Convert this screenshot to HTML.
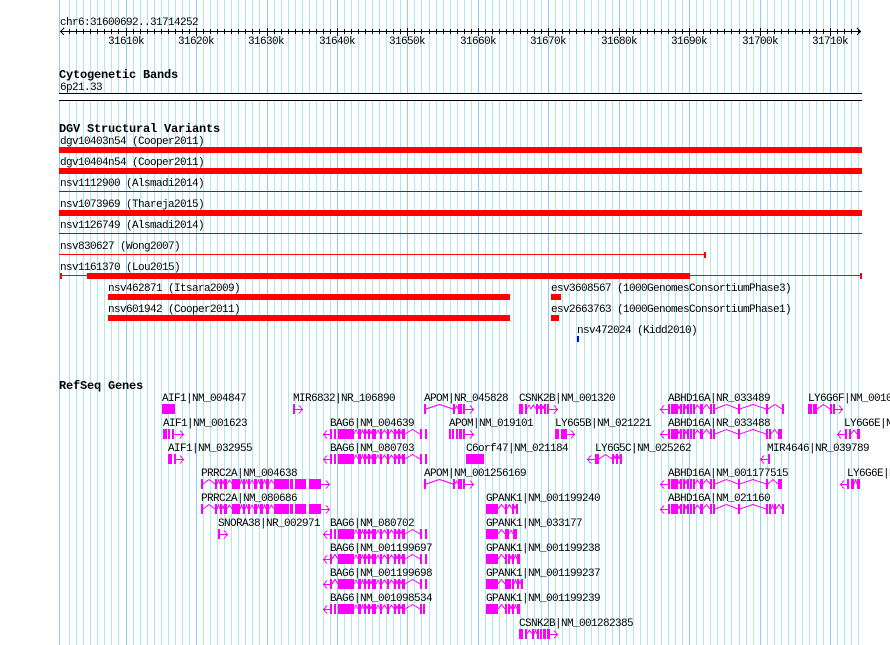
<!DOCTYPE html>
<html><head><meta charset="utf-8"><title>Genome browser</title>
<style>
html,body{margin:0;padding:0;background:#fff}
svg{display:block}
text{font-family:"Liberation Mono","DejaVu Sans Mono",monospace;font-size:11px;fill:#000;letter-spacing:-.6px;white-space:pre}
text.b{font-weight:bold;font-size:12px;letter-spacing:-.2px}
.e{fill:#f0f;stroke:none}
.i{fill:none;stroke:#f0f;stroke-width:1}
</style></head><body>
<svg xmlns="http://www.w3.org/2000/svg" width="890" height="645" viewBox="0 0 890 645" shape-rendering="crispEdges">
<rect width="890" height="645" fill="#fff"/>
<path stroke="#a8ebf0" stroke-width="1" fill="none" d="M69.5 0V645M76.5 0V645M83.5 0V645M90.5 0V645M97.5 0V645M104.5 0V645M111.5 0V645M118.5 0V645M133.5 0V645M140.5 0V645M147.5 0V645M154.5 0V645M161.5 0V645M168.5 0V645M175.5 0V645M182.5 0V645M189.5 0V645M203.5 0V645M210.5 0V645M217.5 0V645M224.5 0V645M231.5 0V645M238.5 0V645M245.5 0V645M252.5 0V645M259.5 0V645M274.5 0V645M281.5 0V645M288.5 0V645M295.5 0V645M302.5 0V645M309.5 0V645M316.5 0V645M323.5 0V645M330.5 0V645M344.5 0V645M351.5 0V645M358.5 0V645M365.5 0V645M372.5 0V645M379.5 0V645M386.5 0V645M393.5 0V645M400.5 0V645M414.5 0V645M421.5 0V645M429.5 0V645M436.5 0V645M443.5 0V645M450.5 0V645M457.5 0V645M464.5 0V645M471.5 0V645M485.5 0V645M492.5 0V645M499.5 0V645M506.5 0V645M513.5 0V645M520.5 0V645M527.5 0V645M534.5 0V645M541.5 0V645M555.5 0V645M562.5 0V645M569.5 0V645M576.5 0V645M584.5 0V645M591.5 0V645M598.5 0V645M605.5 0V645M612.5 0V645M626.5 0V645M633.5 0V645M640.5 0V645M647.5 0V645M654.5 0V645M661.5 0V645M668.5 0V645M675.5 0V645M682.5 0V645M696.5 0V645M703.5 0V645M710.5 0V645M717.5 0V645M724.5 0V645M731.5 0V645M739.5 0V645M746.5 0V645M753.5 0V645M767.5 0V645M774.5 0V645M781.5 0V645M788.5 0V645M795.5 0V645M802.5 0V645M809.5 0V645M816.5 0V645M823.5 0V645M837.5 0V645M844.5 0V645M851.5 0V645M858.5 0V645"/>
<path stroke="#87cefa" stroke-width="1" fill="none" d="M59.5 0V645M126.5 0V645M196.5 0V645M267.5 0V645M337.5 0V645M407.5 0V645M478.5 0V645M548.5 0V645M619.5 0V645M689.5 0V645M760.5 0V645M830.5 0V645"/>

<!-- ruler -->
<path stroke="#000" fill="none" d="M60 31.5H861M69.5 29V34M76.5 29V34M83.5 29V34M90.5 29V34M97.5 29V34M104.5 29V34M111.5 29V34M118.5 29V34M133.5 29V34M140.5 29V34M147.5 29V34M154.5 29V34M161.5 29V34M168.5 29V34M175.5 29V34M182.5 29V34M189.5 29V34M203.5 29V34M210.5 29V34M217.5 29V34M224.5 29V34M231.5 29V34M238.5 29V34M245.5 29V34M252.5 29V34M259.5 29V34M274.5 29V34M281.5 29V34M288.5 29V34M295.5 29V34M302.5 29V34M309.5 29V34M316.5 29V34M323.5 29V34M330.5 29V34M344.5 29V34M351.5 29V34M358.5 29V34M365.5 29V34M372.5 29V34M379.5 29V34M386.5 29V34M393.5 29V34M400.5 29V34M414.5 29V34M421.5 29V34M429.5 29V34M436.5 29V34M443.5 29V34M450.5 29V34M457.5 29V34M464.5 29V34M471.5 29V34M485.5 29V34M492.5 29V34M499.5 29V34M506.5 29V34M513.5 29V34M520.5 29V34M527.5 29V34M534.5 29V34M541.5 29V34M555.5 29V34M562.5 29V34M569.5 29V34M576.5 29V34M584.5 29V34M591.5 29V34M598.5 29V34M605.5 29V34M612.5 29V34M626.5 29V34M633.5 29V34M640.5 29V34M647.5 29V34M654.5 29V34M661.5 29V34M668.5 29V34M675.5 29V34M682.5 29V34M696.5 29V34M703.5 29V34M710.5 29V34M717.5 29V34M724.5 29V34M731.5 29V34M739.5 29V34M746.5 29V34M753.5 29V34M767.5 29V34M774.5 29V34M781.5 29V34M788.5 29V34M795.5 29V34M802.5 29V34M809.5 29V34M816.5 29V34M823.5 29V34M837.5 29V34M844.5 29V34M851.5 29V34M858.5 29V34M126.5 28V36M196.5 28V36M267.5 28V36M337.5 28V36M407.5 28V36M478.5 28V36M548.5 28V36M619.5 28V36M689.5 28V36M760.5 28V36M830.5 28V36M64 28L60.5 31.5L64 35M857 28L860.5 31.5L857 35"/>
<text x="60" y="25">chr6:31600692..31714252</text>
<text x="108" y="44">31610k</text><text x="178" y="44">31620k</text><text x="248" y="44">31630k</text><text x="319" y="44">31640k</text><text x="389" y="44">31650k</text><text x="460" y="44">31660k</text><text x="530" y="44">31670k</text><text x="601" y="44">31680k</text><text x="671" y="44">31690k</text><text x="742" y="44">31700k</text><text x="812" y="44">31710k</text>

<!-- cytobands -->
<text class="b" x="59" y="78">Cytogenetic Bands</text>
<text x="60" y="90">6p21.33</text>
<rect x="59" y="93" width="803" height="8" fill="#fff"/>
<rect x="59" y="93" width="803" height="1" fill="#000"/>
<rect x="59" y="100" width="803" height="1" fill="#000"/>

<!-- DGV -->
<text class="b" x="59" y="132">DGV Structural Variants</text>
<text x="60" y="144">dgv10403n54 (Cooper2011)</text>
<text x="60" y="165">dgv10404n54 (Cooper2011)</text>
<text x="60" y="186">nsv1112900 (Alsmadi2014)</text>
<text x="60" y="207">nsv1073969 (Thareja2015)</text>
<text x="60" y="228">nsv1126749 (Alsmadi2014)</text>
<text x="60" y="249">nsv830627 (Wong2007)</text>
<text x="60" y="270">nsv1161370 (Lou2015)</text>
<text x="108" y="291">nsv462871 (Itsara2009)</text>
<text x="108" y="312">nsv601942 (Cooper2011)</text>
<text x="551" y="291">esv3608567 (1000GenomesConsortiumPhase3)</text>
<text x="551" y="312">esv2663763 (1000GenomesConsortiumPhase1)</text>
<text x="577" y="333">nsv472024 (Kidd2010)</text>
<g fill="#f00">
<rect x="59" y="147" width="803" height="6"/>
<rect x="59" y="168" width="803" height="6"/>
<rect x="59" y="210" width="803" height="6"/>
<rect x="59" y="254" width="646" height="1"/>
<rect x="704" y="252" width="2" height="6"/>
<rect x="60" y="273" width="2" height="6"/>
<rect x="60" y="275" width="802" height="1"/>
<rect x="87" y="273" width="603" height="6"/>
<rect x="860" y="273" width="2" height="6"/>
<rect x="108" y="294" width="402" height="6"/>
<rect x="108" y="315" width="402" height="6"/>
<rect x="551" y="294" width="10" height="6"/>
<rect x="551" y="315" width="8" height="6"/>
</g>
<rect x="59" y="191" width="803" height="1" fill="#00506e"/>
<rect x="59" y="233" width="803" height="1" fill="#00506e"/>
<rect x="577" y="336" width="2" height="6" fill="#00f"/>

<!-- Genes labels -->
<text class="b" x="59" y="389">RefSeq Genes</text>
<text x="162" y="401">AIF1|NM_004847</text>
<text x="293" y="401">MIR6832|NR_106890</text>
<text x="424" y="401">APOM|NR_045828</text>
<text x="519" y="401">CSNK2B|NM_001320</text>
<text x="668" y="401">ABHD16A|NR_033489</text>
<text x="808" y="401">LY6G6F|NM_001003693</text>
<text x="163" y="426">AIF1|NM_001623</text>
<text x="330" y="426">BAG6|NM_004639</text>
<text x="449" y="426">APOM|NM_019101</text>
<text x="555" y="426">LY6G5B|NM_021221</text>
<text x="668" y="426">ABHD16A|NR_033488</text>
<text x="844" y="426">LY6G6E|NR_003943</text>
<text x="168" y="451">AIF1|NM_032955</text>
<text x="330" y="451">BAG6|NM_080703</text>
<text x="466" y="451">C6orf47|NM_021184</text>
<text x="595" y="451">LY6G5C|NM_025262</text>
<text x="767" y="451">MIR4646|NR_039789</text>
<text x="201" y="476">PRRC2A|NM_004638</text>
<text x="424" y="476">APOM|NM_001256169</text>
<text x="668" y="476">ABHD16A|NM_001177515</text>
<text x="847" y="476">LY6G6E|NM_001001852</text>
<text x="201" y="501">PRRC2A|NM_080686</text>
<text x="486" y="501">GPANK1|NM_001199240</text>
<text x="668" y="501">ABHD16A|NM_021160</text>
<text x="218" y="526">SNORA38|NR_002971</text>
<text x="330" y="526">BAG6|NM_080702</text>
<text x="486" y="526">GPANK1|NM_033177</text>
<text x="330" y="551">BAG6|NM_001199697</text>
<text x="486" y="551">GPANK1|NM_001199238</text>
<text x="330" y="576">BAG6|NM_001199698</text>
<text x="486" y="576">GPANK1|NM_001199237</text>
<text x="330" y="601">BAG6|NM_001098534</text>
<text x="486" y="601">GPANK1|NM_001199239</text>
<text x="519" y="626">CSNK2B|NM_001282385</text>

<defs>
<path id="bagc" class="e" d="M338 0h16v10h-16zM358 0h3v10h-3zM364 0h2v10h-2zM368 0h2v10h-2zM372 0h4v10h-4zM380 0h2v10h-2zM387 0h2v10h-2zM394 0h2v10h-2zM398 0h2v10h-2zM402 0h3v10h-3z"/>
<path id="bagi" class="i" d="M354 5L356 1L358 5M361 5L362.5 1L364 5M366 5L367 2L368 5M370 5L371 2L372 5M376 5L378 1L380 5M382 5L384.5 1L387 5M389 5L391.5 1L394 5M396 5L397 2L398 5M400 5L401 2L402 5M405 5L412.5 0.5L420 5"/>
<path id="abhc" class="e" d="M668 0h2v10h-2zM671 0h7v10h-7zM680 0h2v10h-2zM683 0h2v10h-2zM687 0h2v10h-2zM690 0h2v10h-2zM693 0h2v10h-2zM700 0h3v10h-3zM710 0h2v10h-2zM713 0h2v10h-2zM738 0h2v10h-2zM766 0h2v10h-2z"/>
<path id="abhi" class="i" d="M660 5.5H668M664 1.5L660.5 5.5L664 9.5M678 5L679 2L680 5M685 5L686 2L687 5M695 5L697.5 1L700 5M703 5L706.5 0.5L710 5M715 5L726.5 0.5L738 5M740 5L753 0.5L766 5"/>
<path id="prrc" class="e" d="M201 0h2v10h-2zM215 0h2v10h-2zM220 0h2v10h-2zM224 0h3v10h-3zM232 0h8v10h-8zM243 0h2v10h-2zM248 0h2v10h-2zM254 0h3v10h-3zM260 0h3v10h-3zM266 0h3v10h-3zM274 0h15v10h-15zM290 0h3v10h-3zM295 0h11v10h-11zM309 0h12v10h-12z"/>
<path id="prri" class="i" d="M203 5L209 0.5L215 5M217 5L218.5 1L220 5M222 5L223 2L224 5M227 5L229.5 1L232 5M240 5L241.5 1L243 5M245 5L246.5 1L248 5M250 5L252 1L254 5M257 5L258.5 1L260 5M263 5L264.5 1L266 5M269 5L271.5 1L274 5M321 5.5H330M326 1.5L329.5 5.5L326 9.5"/>
<path id="gex" class="e" d="M486 0h12v10h-12z"/>
</defs>

<!-- Row 0 -->
<g transform="translate(0,404)">
<path class="e" d="M162 0h13v10h-13zM293 0h2v10h-2zM424 0h2v10h-2zM453 0h2v10h-2zM458 0h4v10h-4zM463 0h2v10h-2zM519 0h4v10h-4zM525 0h2v10h-2zM536 0h2v10h-2zM540 0h2v10h-2zM544 0h2v10h-2zM547 0h2v10h-2zM808 0h4v10h-4zM813 0h4v10h-4zM830 0h2v10h-2zM833 0h2v10h-2zM782 0h2v10h-2z"/>
<path class="i" d="M295 5.5H303M299 1.5L302.5 5.5L299 9.5M426 5L439.5 0.5L453 5M455 5L456.5 2L458 5M465 5.5H474M470 1.5L473.5 5.5L470 9.5M527 5L529 1L531 5L533.5 1L536 5M538 5L539 2L540 5M542 5L543 2L544 5M549 5.5H558M554 1.5L557.5 5.5L554 9.5M768 5L775 0.5L782 5M817 5L823.5 0.5L830 5M835 5.5H843M839 1.5L842.5 5.5L839 9.5"/>
<use href="#abhc"/><use href="#abhi"/>
</g>
<!-- Row 1 -->
<g transform="translate(0,429)">
<path class="e" d="M163 0h4v10h-4zM168 0h2v10h-2zM172 0h2v10h-2zM420 0h2v10h-2zM425 0h2v10h-2zM330 0h2v10h-2zM334 0h2v10h-2zM449 0h2v10h-2zM452 0h2v10h-2zM456 0h2v10h-2zM459 0h3v10h-3zM463 0h2v10h-2zM555 0h4v10h-4zM561 0h6v10h-6zM769 0h2v10h-2zM778 0h4v10h-4zM845 0h2v10h-2zM849 0h2v10h-2zM857 0h3v10h-3z"/>
<path class="i" d="M174 5.5H184M180 1.5L183.5 5.5L180 9.5M323 5.5H330M327 1.5L323.5 5.5L327 9.5M465 5.5H474M470 1.5L473.5 5.5L470 9.5M567 5.5H575M571 1.5L574.5 5.5L571 9.5M771 5L774.5 0.5L778 5M837 5.5H845M841 1.5L837.5 5.5L841 9.5M851 5L854 1L857 5"/>
<use href="#bagc"/><use href="#bagi"/><use href="#abhc"/><use href="#abhi"/>
</g>
<!-- Row 2 -->
<g transform="translate(0,454)">
<path class="e" d="M168 0h4v10h-4zM174 0h2v10h-2zM330 0h2v10h-2zM334 0h2v10h-2zM420 0h2v10h-2zM425 0h2v10h-2zM466 0h18v10h-18zM595 0h4v10h-4zM612 0h2v10h-2zM616 0h2v10h-2zM620 0h2v10h-2zM768 0h2v10h-2z"/>
<path class="i" d="M176 5.5H184M180 1.5L183.5 5.5L180 9.5M323 5.5H330M327 1.5L323.5 5.5L327 9.5M587 5.5H595M591 1.5L587.5 5.5L591 9.5M599 5L605.5 0.5L612 5M614 5L615 2L616 5M618 5L619 2L620 5M760 5.5H768M764 1.5L760.5 5.5L764 9.5"/>
<use href="#bagc"/><use href="#bagi"/>
</g>
<!-- Row 3 -->
<g transform="translate(0,479)">
<path class="e" d="M424 0h2v10h-2zM453 0h2v10h-2zM458 0h4v10h-4zM463 0h2v10h-2zM778 0h4v10h-4zM847 0h2v10h-2zM851 0h3v10h-3zM857 0h3v10h-3z"/>
<path class="i" d="M426 5L439.5 0.5L453 5M455 5L456.5 2L458 5M465 5.5H474M470 1.5L473.5 5.5L470 9.5M768 5L773 0.5L778 5M840 5.5H847M844 1.5L840.5 5.5L844 9.5M854 5L855.5 1L857 5"/>
<use href="#prrc"/><use href="#prri"/><use href="#abhc"/><use href="#abhi"/>
</g>
<!-- Row 4 -->
<g transform="translate(0,504)">
<path class="e" d="M505 0h2v10h-2zM512 0h2v10h-2zM516 0h2v10h-2zM769 0h2v10h-2zM774 0h2v10h-2zM782 0h2v10h-2z"/>
<path class="i" d="M498 5L501.5 0.5L505 5M507 5L509.5 0.5L512 5M514 5L515 2L516 5M771 5L772.5 1L774 5M776 5L779 0.5L782 5"/>
<use href="#gex"/><use href="#prrc"/><use href="#prri"/><use href="#abhc"/><use href="#abhi"/>
</g>
<!-- Row 5 -->
<g transform="translate(0,529)">
<path class="e" d="M218 0h2v10h-2zM330 0h2v10h-2zM334 0h2v10h-2zM420 0h2v10h-2zM425 0h2v10h-2zM505 0h4v10h-4zM513 0h4v10h-4z"/>
<path class="i" d="M220 5.5H228M224 1.5L227.5 5.5L224 9.5M323 5.5H330M327 1.5L323.5 5.5L327 9.5M498 5L501.5 0.5L505 5M509 5L511 1L513 5"/>
<use href="#bagc"/><use href="#bagi"/><use href="#gex"/>
</g>
<!-- Row 6 -->
<g transform="translate(0,554)">
<path class="e" d="M330 0h2v10h-2zM420 0h2v10h-2zM425 0h2v10h-2zM505 0h2v10h-2zM508 0h2v10h-2zM512 0h2v10h-2zM517 0h3v10h-3z"/>
<path class="i" d="M323 5.5H330M327 1.5L323.5 5.5L327 9.5M332 5L335 0.5L338 5M498 5L501.5 0.5L505 5M510 5L511 2L512 5M514 5L515.5 1L517 5"/>
<use href="#bagc"/><use href="#bagi"/><use href="#gex"/>
</g>
<!-- Row 7 -->
<g transform="translate(0,579)">
<path class="e" d="M330 0h2v10h-2zM420 0h2v10h-2zM425 0h2v10h-2zM505 0h6v10h-6zM512 0h2v10h-2zM517 0h2v10h-2zM521 0h2v10h-2z"/>
<path class="i" d="M323 5.5H330M327 1.5L323.5 5.5L327 9.5M332 5L335 0.5L338 5M498 5L501.5 0.5L505 5M514 5L515.5 1L517 5M519 5L520 2L521 5"/>
<use href="#bagc"/><use href="#bagi"/><use href="#gex"/>
</g>
<!-- Row 8 -->
<g transform="translate(0,604)">
<path class="e" d="M330 0h2v10h-2zM334 0h2v10h-2zM420 0h2v10h-2zM423 0h2v10h-2zM505 0h2v10h-2zM508 0h2v10h-2zM512 0h2v10h-2zM517 0h3v10h-3z"/>
<path class="i" d="M323 5.5H330M327 1.5L323.5 5.5L327 9.5M498 5L501.5 0.5L505 5M510 5L511 2L512 5M514 5L515.5 1L517 5"/>
<use href="#bagc"/><use href="#bagi"/><use href="#gex"/>
</g>
<!-- Row 9 -->
<g transform="translate(0,629)">
<path class="e" d="M519 0h4v10h-4zM525 0h2v10h-2zM532 0h2v10h-2zM537 0h2v10h-2zM540 0h2v10h-2zM543 0h3v10h-3zM547 0h3v10h-3z"/>
<path class="i" d="M527 5L529.5 1L532 5M534 5L535.5 1L537 5M550 5.5H558M554 1.5L557.5 5.5L554 9.5"/>
</g>
</svg>
</body></html>
